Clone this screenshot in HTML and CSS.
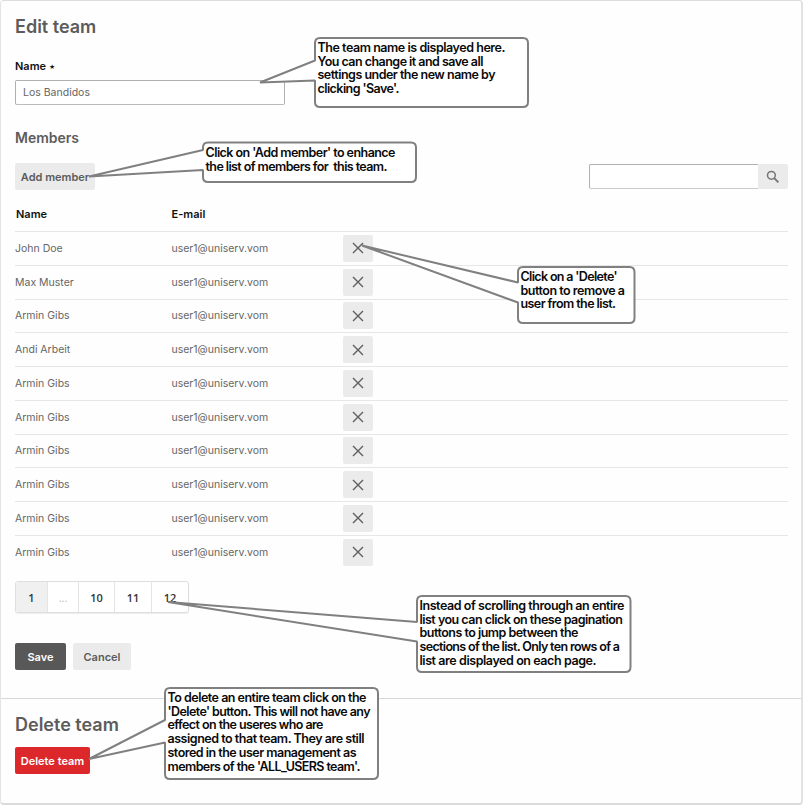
FILE: index.html
```html
<!DOCTYPE html>
<html lang="en">
<head>
<meta charset="utf-8">
<title>Edit team</title>
<link rel="stylesheet" href="styles.css">
</head>
<body>
<svg class="defs" aria-hidden="true">
  <symbol id="x" viewBox="0 0 12 12"><path d="M1 1 11 11M11 1 1 11" fill="none" stroke="#5e5e5e" stroke-width="1.4"/></symbol>
</svg>
<main class="card">
  <section class="edit">
    <h1 class="title">Edit team</h1>
    <label class="label" for="team">Name <span class="star">⋆</span></label>
    <input class="field" id="team" value="Los Bandidos">
    <h2 class="subtitle">Members</h2>
    <div class="toolbar">
      <button class="btn add">Add member</button>
      <div class="search">
        <input class="search-field" aria-label="Search">
        <button class="search-btn" aria-label="Search"><svg width="14" height="14" viewBox="0 0 14 14"><circle cx="5.4" cy="5.3" r="3.9" fill="none" stroke="#757575" stroke-width="1.5"/><path d="M8.2 8.2 12.4 12.4" stroke="#757575" stroke-width="1.9"/></svg></button>
      </div>
    </div>
    <div class="table">
      <div class="row head"><span>Name</span><span>E-mail</span></div>
      <div class="row"><span>John Doe</span><span class="mail">user1@uniserv.vom</span><button class="del"><svg width="12" height="12"><use href="#x"/></svg></button></div>
      <div class="row"><span>Max Muster</span><span class="mail">user1@uniserv.vom</span><button class="del"><svg width="12" height="12"><use href="#x"/></svg></button></div>
      <div class="row"><span>Armin Gibs</span><span class="mail">user1@uniserv.vom</span><button class="del"><svg width="12" height="12"><use href="#x"/></svg></button></div>
      <div class="row"><span>Andi Arbeit</span><span class="mail">user1@uniserv.vom</span><button class="del"><svg width="12" height="12"><use href="#x"/></svg></button></div>
      <div class="row"><span>Armin Gibs</span><span class="mail">user1@uniserv.vom</span><button class="del"><svg width="12" height="12"><use href="#x"/></svg></button></div>
      <div class="row"><span>Armin Gibs</span><span class="mail">user1@uniserv.vom</span><button class="del"><svg width="12" height="12"><use href="#x"/></svg></button></div>
      <div class="row"><span>Armin Gibs</span><span class="mail">user1@uniserv.vom</span><button class="del"><svg width="12" height="12"><use href="#x"/></svg></button></div>
      <div class="row"><span>Armin Gibs</span><span class="mail">user1@uniserv.vom</span><button class="del"><svg width="12" height="12"><use href="#x"/></svg></button></div>
      <div class="row"><span>Armin Gibs</span><span class="mail">user1@uniserv.vom</span><button class="del"><svg width="12" height="12"><use href="#x"/></svg></button></div>
      <div class="row"><span>Armin Gibs</span><span class="mail">user1@uniserv.vom</span><button class="del"><svg width="12" height="12"><use href="#x"/></svg></button></div>
    </div>
    <nav class="pages"><span class="page current">1</span><span class="page gap">...</span><span class="page">10</span><span class="page wide">11</span><span class="page wide">12</span></nav>
    <div class="actions"><button class="btn save">Save</button><button class="btn cancel">Cancel</button></div>
  </section>
  <section class="delete">
    <h1 class="title">Delete team</h1>
    <button class="btn danger">Delete team</button>
  </section>
</main>
<svg class="callouts" width="803" height="805" viewBox="0 0 803 805">
  <g class="bubble">
    <path d="M320 38H523Q528 38 528 43V102Q528 107 523 107H320Q315 107 315 102V80.5L260 82.5 315 60.500V43Q315 38 320 38Z"/>
    <path d="M208 142.500H411Q416 142.500 416 147.500V177Q416 182 411 182H208Q203 182 203 177V170L89 176.500 203 150V147.500Q203 142.500 208 142.500Z"/>
    <path d="M523 267H629.500Q634.500 267 634.500 272V318Q634.500 323 629.500 323H523Q518 323 518 318V302.500L362 245.500 518 282.500V272Q518 267 523 267Z"/>
    <path d="M422 596H625.500Q630.500 596 630.500 601V667Q630.500 672 625.500 672H422Q417 672 417 667V641.500L168 602 417 622V601Q417 596 422 596Z"/>
    <path d="M170 688H373Q378 688 378 693V774Q378 779 373 779H170Q165 779 165 774V742.500L89 759 165 720V693Q165 688 170 688Z"/>
  </g>
  <g class="note">
    <text x="317.500" y="52" textLength="188">The team name is displayed here.</text>
    <text x="317.500" y="66" textLength="166">You can change it and save all</text>
    <text x="317.500" y="79" textLength="178">settings under the new name by</text>
    <text x="317.500" y="93" textLength="82">clicking 'Save'.</text>
    <text x="205.500" y="157" textLength="190">Click on 'Add member' to enhance</text>
    <text x="205.500" y="171" textLength="182" xml:space="preserve">the list of members for  this team.</text>
    <text x="520.500" y="281" textLength="97">Click on a 'Delete'</text>
    <text x="520.500" y="295" textLength="104.500">button to remove a</text>
    <text x="520.500" y="308" textLength="95.500">user from the list.</text>
    <text x="419.500" y="610" textLength="205">Instead of scrolling through an entire</text>
    <text x="419.500" y="624" textLength="203.500">list you can click on these pagination</text>
    <text x="419.500" y="637" textLength="159">buttons to jump between the</text>
    <text x="419.500" y="651" textLength="200.500">sections of the list. Only ten rows of a</text>
    <text x="419.500" y="665" textLength="177">list are displayed on each page.</text>
    <text x="167.500" y="702" textLength="199">To delete an entire team click on the</text>
    <text x="167.500" y="716" textLength="203">'Delete' button. This will not have any</text>
    <text x="167.500" y="729" textLength="156">effect on the useres who are</text>
    <text x="167.500" y="743" textLength="197">assigned to that team. They are still</text>
    <text x="167.500" y="757" textLength="189">stored in the user management as</text>
    <text x="167.500" y="771" textLength="193">members of the 'ALL_USERS team'.</text>
  </g>
</svg>
</body>
</html>
```
FILE: styles.css
```css
* { box-sizing: border-box; }
body {
  margin: 0;
  position: relative;
  width: 803px;
  height: 805px;
  overflow: hidden;
  background: #fff;
  font-family: Inter, "Liberation Sans", sans-serif;
  color: #666;
}
.defs { display: none; }
.card {
  width: 803px;
  height: 805px;
  border: 1px solid #ddd;
  border-left-color: #e4e4e4;
  border-right: 2px solid #e2e2e2;
  border-bottom: 2px solid #dadada;
  border-radius: 4px;
  background: #fefefe;
}
.edit {
  height: 698px;
  padding: 14px 13px 0 14px;
  border-bottom: 1px solid #d8d8d8;
}
.title, .subtitle { margin: 0; color: #5c5c5c; font-weight: 600; }
.title { font-size: 18px; line-height: 24px; }
.label {
  display: block;
  margin: 20px 0 0;
  font-size: 11px;
  line-height: 14px;
  font-weight: 600;
  color: #111;
}
.star { font-size: 10px; }
.field {
  display: block;
  width: 270px;
  height: 25px;
  margin: 7px 0 0;
  padding: 0 7px;
  border: 1px solid #b0b0b0;
  border-bottom-color: #bbb;
  border-radius: 2px;
  background: #fff;
  font: 10.5px Inter, sans-serif;
  color: #666;
}
.subtitle { margin-top: 24px; font-size: 14px; line-height: 18px; }
.toolbar { display: flex; justify-content: space-between; margin-top: 16px; height: 27px; }
button { border: 0; padding: 0; font-family: inherit; }
.btn {
  display: block;
  height: 27px;
  border-radius: 2px;
  background: #ebebeb;
  color: #5c5c5c;
  font-size: 11px;
  font-weight: 600;
}
.add { width: 80px; }
.search { display: flex; margin-top: 1px; height: 26px; }
.search-field {
  width: 169px;
  height: 25px;
  border: 1px solid #b0b0b0;
  border-bottom-color: #ccc;
  border-right: 0;
  border-radius: 2px 0 0 2px;
  background: #fff;
}
.search-btn {
  display: flex;
  align-items: center;
  justify-content: center;
  width: 30px;
  height: 25px;
  border-radius: 0 2px 2px 0;
  background: #ebebeb;
}
.row {
  display: grid;
  grid-template-columns: 156.5px 171.5px 30px;
  align-items: center;
  height: 33.75px;
  border-top: 1px solid #e6e6e6;
  font-size: 10.5px;
}
.row.head {
  height: 34px;
  margin-top: 7px;
  border: 0;
  padding-left: 1px;
  grid-template-columns: 155.5px 171.5px;
  font-size: 11px;
  font-weight: 600;
  color: #111;
}
.del {
  display: flex;
  align-items: center;
  justify-content: center;
  width: 30px;
  height: 27px;
  border-radius: 2px;
  background: #ebebeb;
}
.pages {
  display: flex;
  width: 174px;
  height: 32px;
  margin-top: 12.500px;
  border: 1px solid #dedede;
  border-radius: 3px;
  box-shadow: 0 1px 1px #eee;
  background: #fff;
  font: 600 11px "Open Sans", sans-serif;
  color: #333;
}
.page {
  display: flex;
  align-items: center;
  justify-content: center;
  width: 36px;
  border-right: 1px solid #e4e4e4;
}
.page.current { width: 32px; background: #f0f0f0; }
.page.gap { width: 31px; color: #bbb; font-weight: 400; }
.page.wide { width: 37px; }
.page:last-child { width: 36px; border: 0; }
.actions { display: flex; gap: 7px; margin-top: 30px; }
.save { width: 51px; background: #585858; color: #fff; }
.cancel { width: 58px; }
.delete { padding: 14px; }
.danger { width: 75px; margin-top: 10px; background: #dc282a; color: #fff; }
.callouts { position: absolute; left: 0; top: 0; }
.bubble path { fill: #fff; stroke: #808080; stroke-width: 2; stroke-linejoin: bevel; }
.note text { font-size: 12.5px; font-weight: 600; fill: #0a0a0a; }
```
